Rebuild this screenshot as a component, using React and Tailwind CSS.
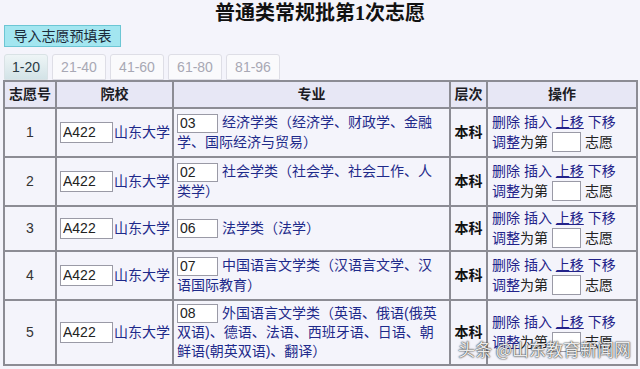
const rows = [
  { no: 1, code: "03", major: "经济学类（经济学、财政学、金融学、国际经济与贸易）", h: "h-[49px]" },
  { no: 2, code: "02", major: "社会学类（社会学、社会工作、人类学）", h: "h-[49px]" },
  { no: 3, code: "06", major: "法学类（法学）", h: "h-[45px]" },
  { no: 4, code: "07", major: "中国语言文学类（汉语言文学、汉语国际教育）", h: "h-[49px]" },
  { no: 5, code: "08", major: "外国语言文学类（英语、俄语(俄英双语)、德语、法语、西班牙语、日语、朝鲜语(朝英双语)、翻译）", h: "h-[65px]" },
];

const tabs = ["1-20", "21-40", "41-60", "61-80", "81-96"];

function App() {
  return (
    <div className="relative w-[640px] h-[369px] overflow-hidden bg-[#f4f4fb] font-['Liberation_Sans','Noto_Sans_CJK_SC',sans-serif] text-[14px]">
      <h1 className="h-[25px] pt-[2px] text-center text-[20px] leading-[22px] font-bold text-[#111] font-['Liberation_Serif','Noto_Sans_CJK_SC',serif]">
        普通类常规批第1次志愿
      </h1>

      <div className="pl-[4px]">
        <button className="h-[22px] w-[117px] bg-[#a3e6f0] border border-[#6cc6d4] text-[14px] leading-[20px] text-[#1b2a3a]">
          导入志愿预填表
        </button>
      </div>

      <div className="flex items-end gap-[4px] pl-[4px] mt-[6px] h-[27px]">
        {tabs.map((t, i) => (
          <div
            key={t}
            className={
              i === 0
                ? "h-[26px] w-[44px] flex items-center justify-center rounded-t-[3px] bg-gradient-to-b from-[#eef5f6] to-[#d3e3e7] border border-[#d9e2e5] text-[#2a3a44] text-[14px]"
                : "h-[26px] w-[54px] flex items-center justify-center rounded-t-[3px] bg-[#fafafc] border border-[#dedee6] text-[#a8a8b4] text-[14px]"
            }
          >
            {t}
          </div>
        ))}
      </div>

      <table className="ml-[3px] w-[633px] border-collapse table-fixed">
        <colgroup>
          <col className="w-[52px]" />
          <col className="w-[117px]" />
          <col className="w-[277px]" />
          <col className="w-[37px]" />
          <col className="w-[150px]" />
        </colgroup>
        <thead>
          <tr className="h-[27px] bg-[#e7e7f5]">
            {["志愿号", "院校", "专业", "层次", "操作"].map((h) => (
              <th key={h} className="border-2 border-[#8c8c94] text-[14px] font-bold text-[#1c1c24] p-0">
                {h}
              </th>
            ))}
          </tr>
        </thead>
        <tbody>
          {rows.map((r) => (
            <tr key={r.no} className={r.h}>
              <td className="border-2 border-[#8c8c94] text-center text-[#333]">{r.no}</td>
              <td className="border-2 border-[#8c8c94] px-[3px]">
                <div className="flex items-center">
                  <input
                    readOnly
                    value="A422"
                    className="w-[53px] h-[21px] border border-[#9a9aa6] bg-white px-[2px] text-[14px] text-[#222] outline-none"
                  />
                  <span className="ml-[1px] text-[#1e2a8a] whitespace-nowrap">山东大学</span>
                </div>
              </td>
              <td className="border-2 border-[#8c8c94] pl-[3px] pr-[4px] py-[2px] leading-[19px] text-[#1e2a8a]">
                <input
                  readOnly
                  value={r.code}
                  className="w-[41px] h-[19px] border border-[#9a9aa6] bg-white px-[2px] text-[14px] text-[#222] outline-none align-middle mr-[4px]"
                />
                {r.major}
              </td>
              <td className="border-2 border-[#8c8c94] text-center font-bold text-[#111]">本科</td>
              <td className="border-2 border-[#8c8c94] pl-[4px] leading-[19px]">
                <div className="text-[#23238a] whitespace-nowrap">
                  删除 插入 <span className="underline">上移</span> 下移
                </div>
                <div className="flex items-center whitespace-nowrap">
                  <span className="text-[#23238a]">调整</span>
                  <span className="text-[#222]">为第</span>
                  <input readOnly className="mx-[4px] w-[29px] h-[20px] border border-[#9a9aa6] bg-white outline-none" />
                  <span className="text-[#222]">志愿</span>
                </div>
              </td>
            </tr>
          ))}
        </tbody>
      </table>

      <div className="absolute left-[458px] top-[338px] text-[17px] leading-[22px] text-white/90 [text-shadow:0_0_2px_rgba(40,40,40,1),0_0_1px_rgba(40,40,40,1)] font-['Noto_Sans_CJK_SC',sans-serif] whitespace-nowrap">
        头条 @山东教育新闻网
      </div>
    </div>
  );
}

export default App;
